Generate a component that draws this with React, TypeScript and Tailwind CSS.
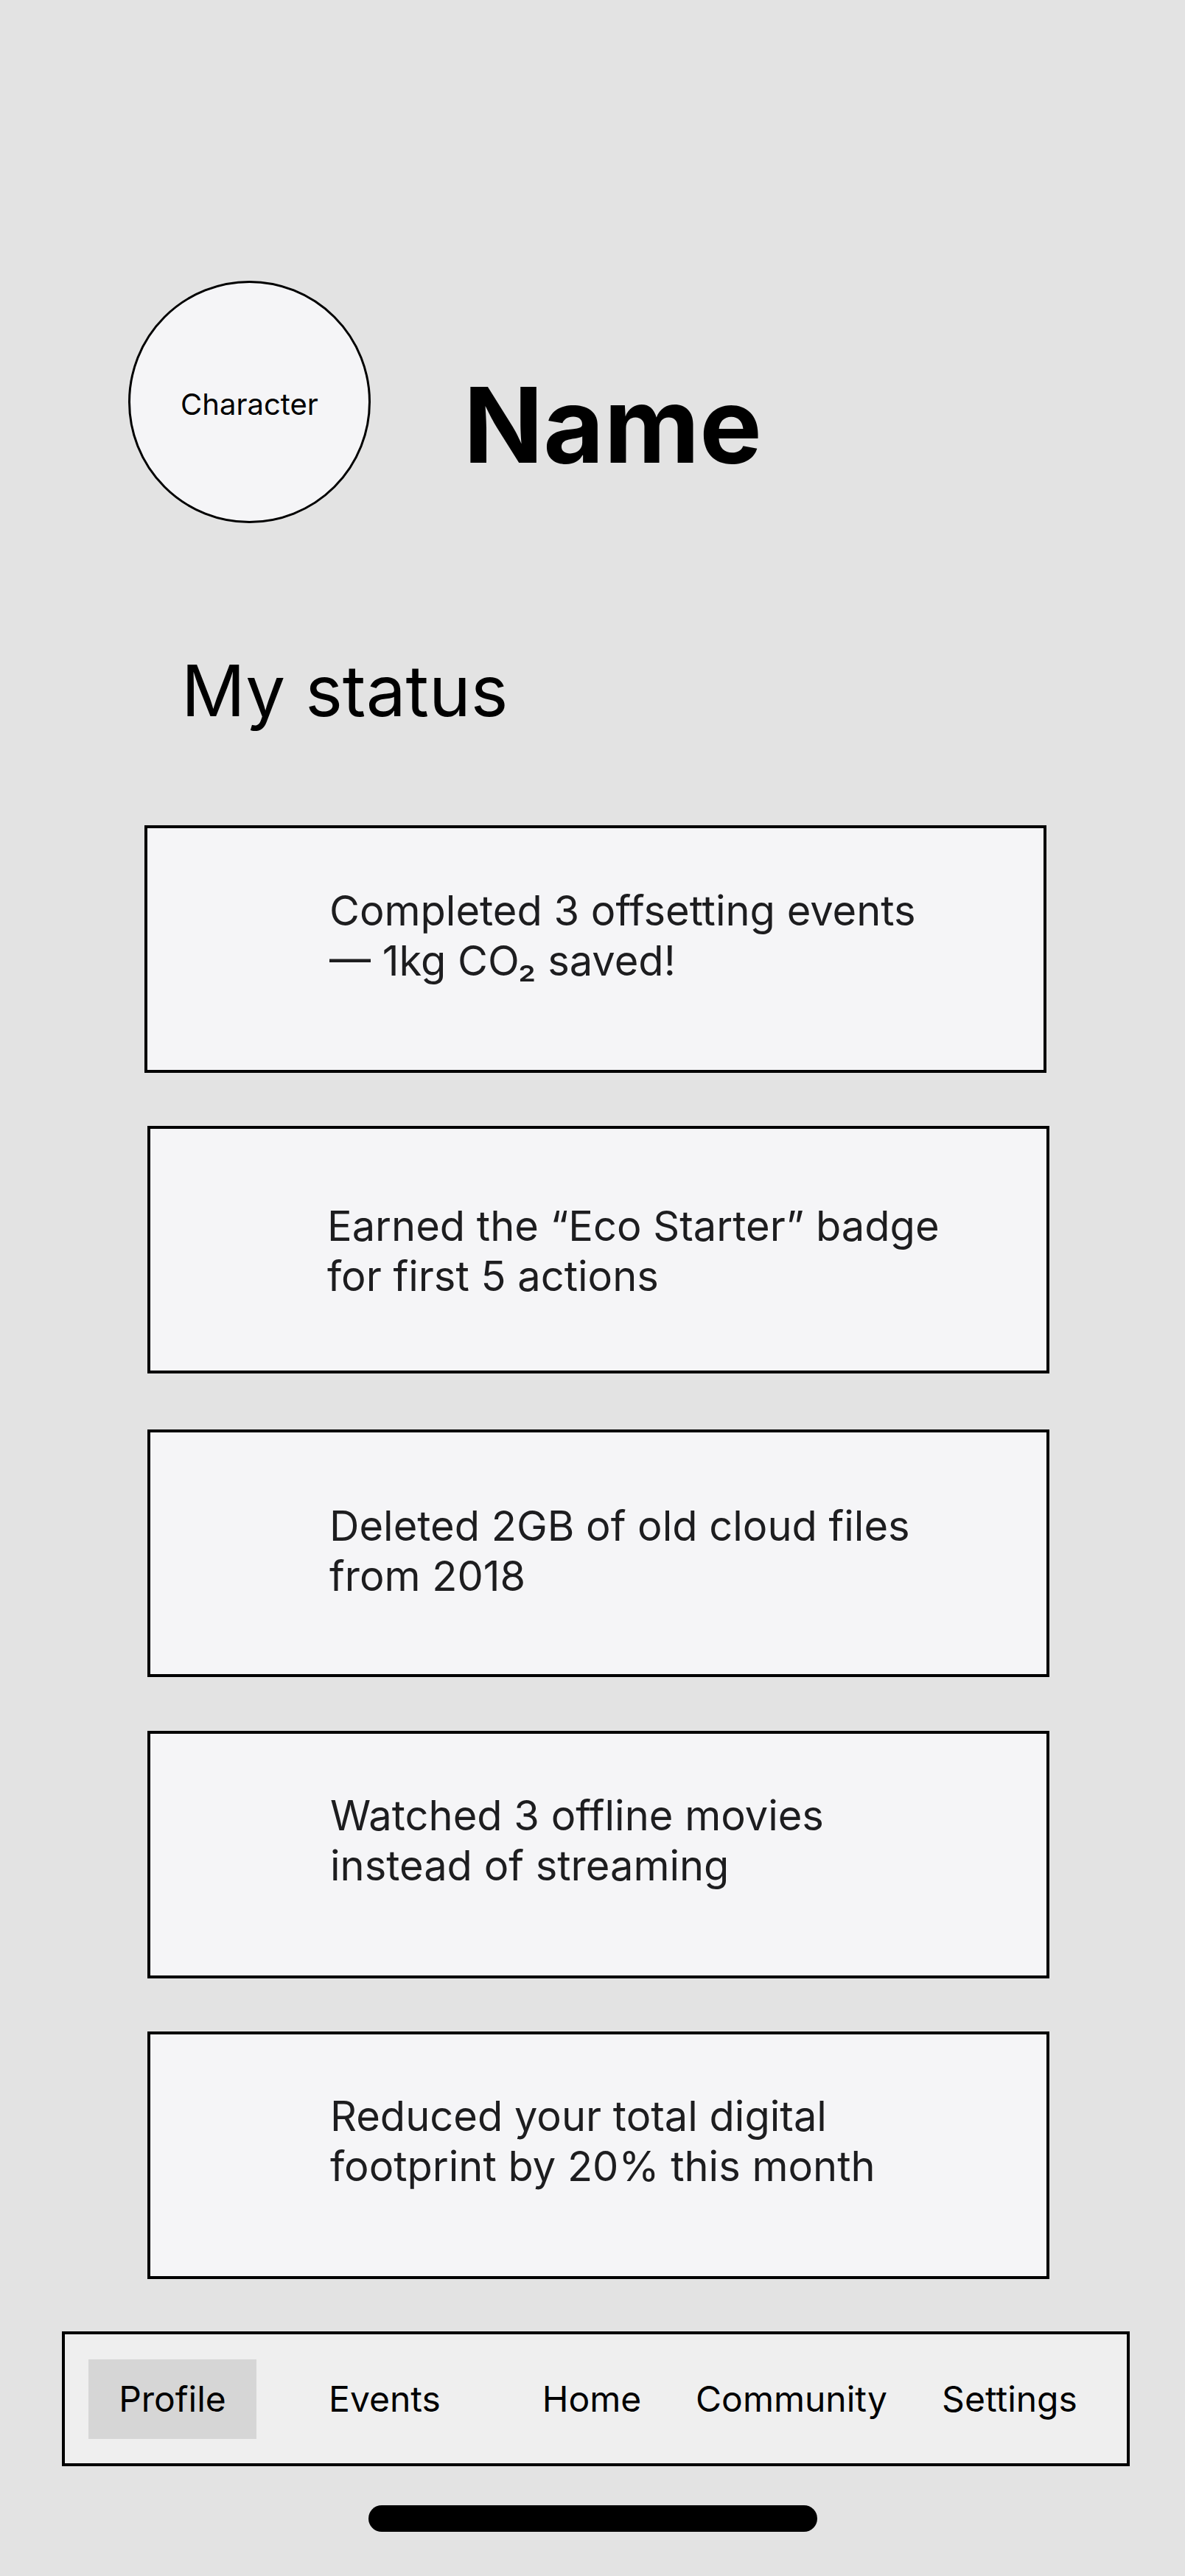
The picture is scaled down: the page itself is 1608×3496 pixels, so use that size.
import React from "react";

type Status = {
  lines: React.ReactNode[];
  left: string;
  pad: string;
  gap: string;
};

const statuses: Status[] = [
  {
    lines: ["Completed 3 offsetting events", "— 1kg CO₂ saved!"],
    left: "ml-[196px]",
    pad: "pt-[79px] pl-[247px]",
    gap: "mt-0",
  },
  {
    lines: ["Earned the “Eco Starter” badge", "for first 5 actions"],
    left: "ml-[200px]",
    pad: "pt-[99px] pl-[240px]",
    gap: "mt-[72px]",
  },
  {
    lines: ["Deleted 2GB of old cloud files", "from 2018"],
    left: "ml-[200px]",
    pad: "pt-[94px] pl-[243px]",
    gap: "mt-[76px]",
  },
  {
    lines: ["Watched 3 offline movies", "instead of streaming"],
    left: "ml-[200px]",
    pad: "pt-[78px] pl-[244px]",
    gap: "mt-[73px]",
  },
  {
    lines: ["Reduced your total digital", "footprint by 20% this month"],
    left: "ml-[200px]",
    pad: "pt-[78px] pl-[244px]",
    gap: "mt-[72px]",
  },
];

const tabs = [
  { label: "Profile", width: "w-[228px]", active: true },
  { label: "Events", width: "w-[348px]", active: false },
  { label: "Home", width: "w-[214px]", active: false },
  { label: "Community", width: "w-[328px]", active: false },
  { label: "Settings", width: "w-[264px]", active: false },
];

function StatusCard({ status }: { status: Status }) {
  return (
    <div
      className={`${status.left} ${status.gap} w-[1224px] h-[336px] border-4 border-black bg-[#f5f5f7] ${status.pad}`}
    >
      <p className="text-[56px] leading-[1.21] text-[#1d1d1f]">
        {status.lines.map((line, i) => (
          <span key={i} className="block whitespace-nowrap">
            {line}
          </span>
        ))}
      </p>
    </div>
  );
}

export default function App() {
  return (
    <div className="w-full min-h-[3496px] bg-[#e3e3e3] font-['Inter',sans-serif] text-black flex flex-col">
      {/* header */}
      <div className="flex items-start pt-[381px] pl-[174px]">
        <div className="w-[329px] h-[329px] shrink-0 rounded-full border-[3px] border-black bg-[#f5f5f7] flex items-center justify-center pt-[6px]">
          <span className="text-[40px] leading-none">Character</span>
        </div>
        <h1 className="ml-[126px] mt-[110px] text-[142px] leading-[1.21] font-bold">
          Name
        </h1>
      </div>

      <h2 className="mt-[169px] pl-[246px] text-[96px] leading-[1.21]">My status</h2>

      <div className="mt-[125px] flex flex-col">
        {statuses.map((s, i) => (
          <StatusCard key={i} status={s} />
        ))}
      </div>

      {/* bottom nav */}
      <nav className="mt-[71px] ml-[84px] w-[1449px] h-[183px] border-4 border-black bg-[#efefef] flex items-center pl-[32px]">
        {tabs.map((t) =>
          t.active ? (
            <div
              key={t.label}
              className={`${t.width} h-[108px] bg-[#d6d6d6] flex items-center justify-center text-[48px]`}
            >
              {t.label}
            </div>
          ) : (
            <div key={t.label} className={`${t.width} shrink-0 flex justify-center text-[48px]`}>
              {t.label}
            </div>
          )
        )}
      </nav>

      <div className="mt-[53px] mx-auto w-[609px] h-[36px] rounded-full bg-black" />
    </div>
  );
}
